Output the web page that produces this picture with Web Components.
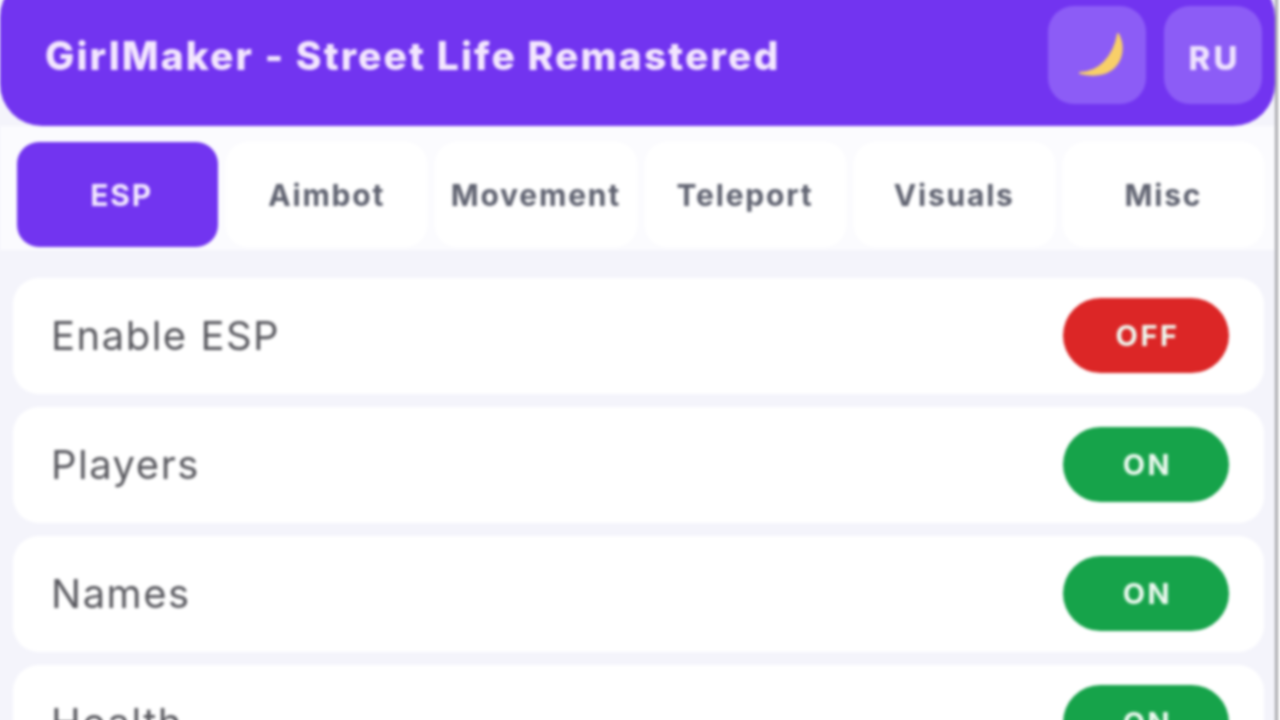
<!DOCTYPE html>
<html>
<head>
<meta charset="utf-8">
<style>
  html, body { margin: 0; height: 720px; overflow: hidden; background: #fff; }
  body { font-family: "Inter", "Liberation Sans", sans-serif; }
</style>
</head>
<body>
<cheat-panel>
  <panel-header slot="header" title-text="GirlMaker - Street Life Remastered"></panel-header>
  <tab-bar slot="tabs">
    <tab-item active>ESP</tab-item>
    <tab-item>Aimbot</tab-item>
    <tab-item>Movement</tab-item>
    <tab-item>Teleport</tab-item>
    <tab-item>Visuals</tab-item>
    <tab-item>Misc</tab-item>
  </tab-bar>
  <option-row label="Enable ESP"></option-row>
  <option-row label="Players" on></option-row>
  <option-row label="Names" on></option-row>
  <option-row label="Health" on></option-row>
</cheat-panel>

<script>
class CheatPanel extends HTMLElement {
  connectedCallback() {
    const shadowRoot = this.attachShadow({ mode: 'open' });
    shadowRoot.innerHTML = `
      <style>
        :host {
          display: block;
          width: 1275px;
          height: 740px;
          margin: -10px 0 0 -10px;
          padding-left: 10px;
          overflow: hidden;
          background: #f4f4fb;
          border-right: 3px solid #a8a8ac;
          filter: blur(1.5px);
        }
        .list {
          display: flex;
          flex-direction: column;
          gap: 13px;
          padding: 28px 11px 0 13px;
        }
      </style>
      <slot name="header"></slot>
      <slot name="tabs"></slot>
      <div class="list"><slot></slot></div>
    `;
  }
}

class PanelHeader extends HTMLElement {
  connectedCallback() {
    const shadowRoot = this.attachShadow({ mode: 'open' });
    shadowRoot.innerHTML = `
      <style>
        :host {
          display: flex;
          align-items: center;
          justify-content: space-between;
          box-sizing: border-box;
          height: 151px;
          margin-top: -15px;
          padding: 21px 13px 13px 45px;
          background: #7234f0;
          border-radius: 42px;
          color: #f3e6fe;
        }
        h1 {
          margin: 2px 0 0;
          font-size: 39px;
          font-weight: 800;
          letter-spacing: 2.1px;
          white-space: nowrap;
        }
        .actions { display: flex; gap: 18px; }
        button {
          display: flex;
          align-items: center;
          justify-content: center;
          width: 98px;
          height: 98px;
          padding: 0;
          border: 0;
          border-radius: 26px;
          background: #8c5cf6;
          color: #eee2fe;
          font: 800 33px "Inter", sans-serif;
          letter-spacing: 3px;
        }
        .lang { padding: 7px 0 0 3px; }
      </style>
      <h1>${this.getAttribute('title-text')}</h1>
      <div class="actions">
        <button aria-label="Theme">
          <svg width="98" height="98" viewBox="0 0 98 98">
            <path d="M32 67 C50 67 66 52 70 28 C80 46 70 76 32 67 Z" fill="#f8cf68" stroke="#f8cf68" stroke-width="2" stroke-linejoin="round"/>
          </svg>
        </button>
        <button class="lang">RU</button>
      </div>
    `;
  }
}

class TabBar extends HTMLElement {
  connectedCallback() {
    const shadowRoot = this.attachShadow({ mode: 'open' });
    shadowRoot.innerHTML = `
      <style>
        :host {
          display: grid;
          grid-template-columns: repeat(6, 1fr);
          gap: 8px;
          padding: 16px 11px 3px 17px;
          background: #fbfbfe;
        }
      </style>
      <slot></slot>
    `;
  }
}

class TabItem extends HTMLElement {
  connectedCallback() {
    const shadowRoot = this.attachShadow({ mode: 'open' });
    shadowRoot.innerHTML = `
      <style>
        :host {
          display: flex;
          align-items: center;
          justify-content: center;
          height: 105px;
          border-radius: 22px;
          background: #fff;
          color: #5f6270;
          font-size: 30px;
          font-weight: 700;
          letter-spacing: 1.8px;
        }
        :host([active]) { background: #7234f0; color: #f3e9fe; padding-left: 8px; }
      </style>
      <slot></slot>
    `;
  }
}

class OptionRow extends HTMLElement {
  connectedCallback() {
    const on = this.hasAttribute('on');
    const shadowRoot = this.attachShadow({ mode: 'open' });
    shadowRoot.innerHTML = `
      <style>
        :host {
          display: flex;
          align-items: center;
          justify-content: space-between;
          box-sizing: border-box;
          height: 116px;
          padding: 0 35px 0 38px;
          flex: none;
          border-radius: 26px;
          background: #fff;
          color: #58585e;
          font-size: 40px;
          letter-spacing: 1.5px;
        }
        .label { padding-bottom: 2px; }
        .toggle {
          display: flex;
          align-items: center;
          justify-content: center;
          box-sizing: border-box;
          width: 166px;
          height: 75px;
          margin-bottom: 2px;
          padding-left: 3px;
          border-radius: 38px;
          font-size: 29px;
          font-weight: 700;
          letter-spacing: 2.5px;
          color: #eefaf1;
          background: ${on ? '#16a34a' : '#dc2626'};
        }
      </style>
      <span class="label">${this.getAttribute('label')}</span>
      <div class="toggle">${on ? 'ON' : 'OFF'}</div>
    `;
  }
}

customElements.define('cheat-panel', CheatPanel);
customElements.define('panel-header', PanelHeader);
customElements.define('tab-bar', TabBar);
customElements.define('tab-item', TabItem);
customElements.define('option-row', OptionRow);
</script>
</body>
</html>
